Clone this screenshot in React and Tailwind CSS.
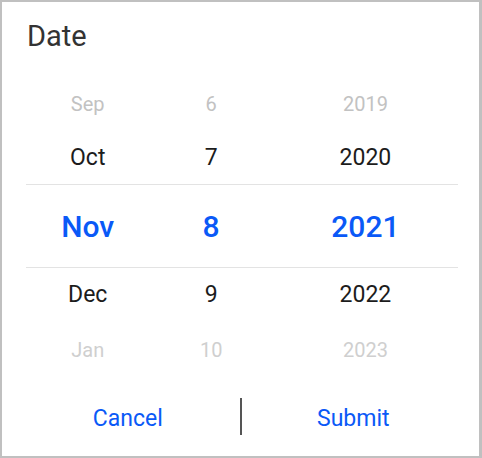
const months = ['Sep', 'Oct', 'Nov', 'Dec', 'Jan']
const days = ['6', '7', '8', '9', '10']
const years = ['2019', '2020', '2021', '2022', '2023']

function Column({ items, className }) {
  return (
    <div className={`flex flex-col items-center ${className}`}>
      <div className="h-[54px] flex items-center text-[20px] text-[#c2c2c2]">{items[0]}</div>
      <div className="h-[54px] flex items-center text-[23px] text-[#1c1c1c]">{items[1]}</div>
      <div className="h-[82px] flex items-center text-[30px] font-medium text-[#0a59f7]">{items[2]}</div>
      <div className="h-[56px] flex items-center text-[23px] text-[#1c1c1c]">{items[3]}</div>
      <div className="h-[54px] flex items-center text-[20px] text-[#cfcfcf]">{items[4]}</div>
    </div>
  )
}

export default function App() {
  return (
    <div
      className="w-[482px] h-[458px] bg-white border-2 border-r-[3px] border-[#c0c0c0] flex flex-col"
      style={{ fontFamily: 'Roboto, "Liberation Sans", sans-serif' }}
    >
      {/* Title */}
      <div className="px-[25px] pt-[14px] h-[75px]">
        <h1 className="text-[29px] text-[#333] leading-[40px]">Date</h1>
      </div>

      {/* Picker */}
      <div className="relative ml-[24px] mr-[21px] flex">
        <div className="absolute left-0 right-0 top-[107px] h-[84px] border-y border-[#e3e3e3] pointer-events-none" />
        <Column items={months} className="flex-[2]" />
        <Column items={days} className="flex-[2]" />
        <Column items={years} className="flex-[3]" />
      </div>

      {/* Buttons */}
      <div className="flex items-center mx-[14px] mt-[19px]">
        <button className="flex-1 text-center text-[23px] text-[#0a59f7] h-[40px] pt-[6px]">Cancel</button>
        <div className="w-[2px] h-[37px] bg-[#555]" />
        <button className="flex-1 text-center text-[23px] text-[#0a59f7] h-[40px] pt-[6px]">Submit</button>
      </div>
    </div>
  )
}
